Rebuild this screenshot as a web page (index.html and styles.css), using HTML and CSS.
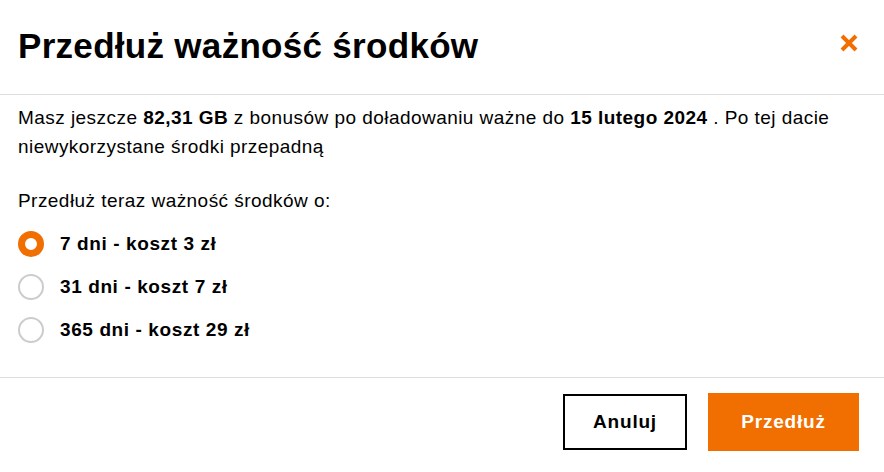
FILE: index.html
```html
<!DOCTYPE html>
<html lang="pl">
<head>
<meta charset="utf-8">
<link rel="stylesheet" href="styles.css">
</head>
<body>
<div class="dialog">
  <header class="dlg-header">
    <h1 class="dlg-title">Przedłuż ważność środków</h1>
    <button class="dlg-close" aria-label="Zamknij">
      <svg width="18" height="18" viewBox="0 0 18 18"><path d="M2 2 L16 16 M16 2 L2 16" stroke="#f16e00" stroke-width="4" stroke-linecap="butt"/></svg>
    </button>
  </header>
  <main class="dlg-body">
    <p class="info">Masz jeszcze <b>82,31 GB</b> z bonusów po doładowaniu ważne do <b>15 lutego 2024</b> . Po tej dacie niewykorzystane środki przepadną</p>
    <p class="question">Przedłuż teraz ważność środków o:</p>
    <div class="options">
      <label class="option"><span class="radio checked"></span><span class="opt-text">7 dni - koszt 3 zł</span></label>
      <label class="option"><span class="radio"></span><span class="opt-text">31 dni - koszt 7 zł</span></label>
      <label class="option"><span class="radio"></span><span class="opt-text">365 dni - koszt 29 zł</span></label>
    </div>
  </main>
  <footer class="dlg-footer">
    <button class="btn btn-outline">Anuluj</button>
    <button class="btn btn-primary">Przedłuż</button>
  </footer>
</div>
</body>
</html>
```
FILE: styles.css
```css
* { box-sizing: border-box; }
html, body { margin: 0; padding: 0; background: #fff; }
body {
  font-family: "Liberation Sans", Arial, Helvetica, sans-serif;
  color: #000;
  width: 884px;
  height: 472px;
  overflow: hidden;
}
.dialog { display: flex; flex-direction: column; height: 472px; }
.dlg-header {
  height: 95px;
  border-bottom: 1px solid #dddddd;
  display: flex;
  align-items: center;
  justify-content: space-between;
  padding: 0 26px 2px 18px;
}
.dlg-title {
  margin: 0;
  font-size: 35px;
  font-weight: 700;
  letter-spacing: 0.3px;
}
.dlg-close {
  border: 0;
  background: none;
  padding: 0;
  width: 18px;
  height: 18px;
  display: flex;
  margin-bottom: 6px;
}
.dlg-body { padding: 8px 18px 0; height: 282px; }
.info {
  margin: 0;
  font-size: 19px;
  line-height: 29px;
  letter-spacing: 0.45px;
}
.info b { font-weight: 700; }
.question {
  margin: 25px 0 0;
  font-size: 19px;
  line-height: 29px;
  letter-spacing: 0.45px;
}
.options { display: flex; flex-direction: column; gap: 16px; margin-top: 15px; }
.option { display: flex; align-items: center; gap: 16px; height: 27px; }
.radio {
  width: 26px;
  height: 26px;
  border-radius: 50%;
  border: 2px solid #cccccc;
  flex: none;
}
.radio.checked { border: 7px solid #f16e00; }
.opt-text { font-size: 19px; font-weight: 700; letter-spacing: 0.6px; }
.dlg-footer {
  border-top: 1px solid #dddddd;
  display: flex;
  justify-content: flex-end;
  gap: 21px;
  padding: 15px 25px 0 0;
  flex: 1;
  align-items: flex-start;
}
.btn {
  font-family: inherit;
  font-size: 19px;
  font-weight: 700;
  letter-spacing: 0.8px;
  height: 58px;
  cursor: pointer;
  padding: 0;
}
.btn-outline {
  background: #fff;
  border: 2px solid #000;
  color: #000;
  width: 124px;
  height: 56px;
  margin-top: 1px;
}
.btn-primary {
  background: #f16e00;
  border: 0;
  color: #fff;
  width: 151px;
}
```
